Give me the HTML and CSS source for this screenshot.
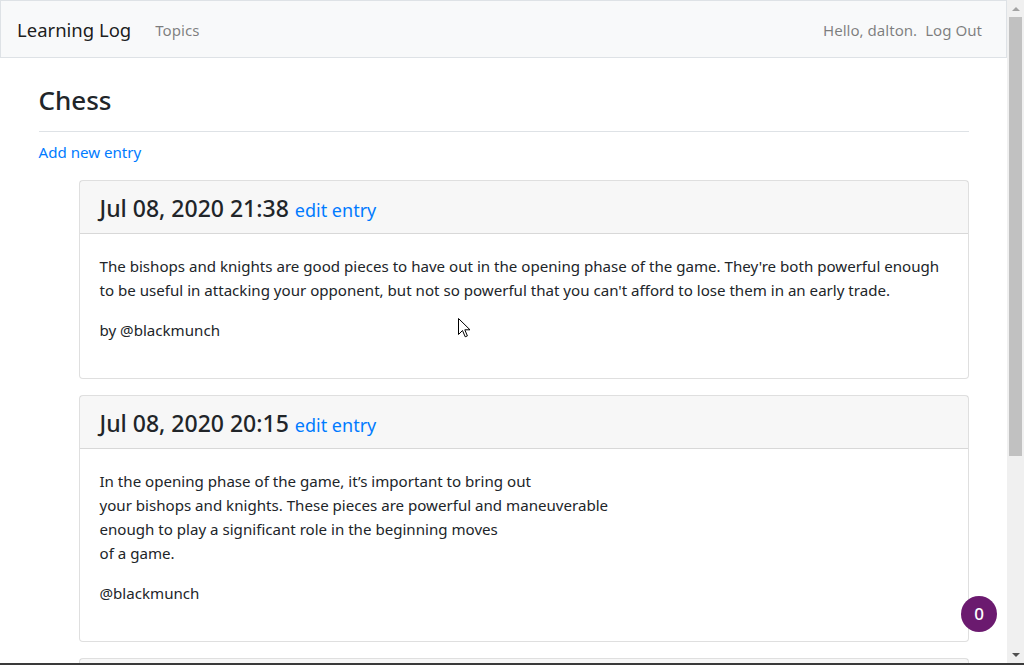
FILE: index.html
```
<!DOCTYPE html>
<html lang="en">
<head>
<meta charset="utf-8">
<title>Learning Log</title>
<link rel="stylesheet" href="styles.css">
</head>
<body>
<div class="window">
  <div class="viewport">
    <nav class="navbar">
      <a class="brand" href="#">Learning Log</a>
      <ul class="nav nav-left">
        <li><a class="nav-link" href="#">Topics</a></li>
      </ul>
      <ul class="nav nav-right">
        <li><span class="nav-text">Hello, dalton.</span></li>
        <li><a class="nav-link" href="#">Log Out</a></li>
      </ul>
    </nav>
    <main class="container">
      <div class="page-header">
        <h3>Chess</h3>
      </div>
      <div class="content">
        <p><a href="#">Add new entry</a></p>
        <ul class="entries">
          <li class="card">
            <h4 class="card-header">Jul 08, 2020 21:38 <small><a href="#">edit entry</a></small></h4>
            <div class="card-body">
              <p>The bishops and knights are good pieces to have out in the opening phase of the game. They're both powerful enough to be useful in attacking your opponent, but not so powerful that you can't afford to lose them in an early trade.</p>
              <p>by @blackmunch</p>
            </div>
          </li>
          <li class="card">
            <h4 class="card-header">Jul 08, 2020 20:15 <small><a href="#">edit entry</a></small></h4>
            <div class="card-body">
              <p>In the opening phase of the game, it’s important to bring out<br>your bishops and knights. These pieces are powerful and maneuverable<br>enough to play a significant role in the beginning moves<br>of a game.</p>
              <p>@blackmunch</p>
            </div>
          </li>
          <li class="card">
            <div class="card-header"></div>
            <div class="card-body"></div>
          </li>
        </ul>
      </div>
    </main>
    <div class="badge">0</div>
    <svg class="cursor" width="13" height="20" viewBox="0 0 13 20"><path d="M0.5 0.5 L0.5 16.5 L4.5 12.5 L7.2 18.8 L9.4 17.9 L6.8 11.8 L12 11.8 Z" fill="#fff" stroke="#000" stroke-width="1" stroke-linejoin="miter"/></svg>
  </div>
  <div class="scrollbar">
    <div class="arrow arrow-up"></div>
    <div class="track"><div class="thumb"></div></div>
    <div class="arrow arrow-down"></div>
  </div>
</div>
<div class="taskline"></div>
</body>
</html>
```
FILE: styles.css
```
* { box-sizing: border-box; }
html, body { margin: 0; padding: 0; height: 665px; overflow: hidden; }
body {
  font-family: "Noto Sans", "Open Sans", sans-serif;
  font-size: 15.1px;
  line-height: 24px;
  color: #212529;
  background: #fff;
  display: flex;
  flex-direction: column;
}
a { color: #007bff; text-decoration: none; }
p { margin: 0 0 16px; }

.window { display: flex; height: 663px; }
.viewport { flex: 1; position: relative; overflow: hidden; }
.taskline { height: 2px; background: #3a3a3a; }

.navbar {
  display: flex;
  align-items: center;
  padding: 9px 16px 7px;
  background: #f8f9fa;
  border: 1px solid #dee2e6;
  margin-bottom: 24px;
  height: 58px;
}
.brand {
  font-size: 18.5px;
  line-height: 30px;
  color: rgba(0,0,0,.9);
  margin-right: 16px;
  padding: 5px 0;
}
.nav { list-style: none; margin: 0; padding: 0; display: flex; }
.nav-right { margin-left: auto; }
.nav-link, .nav-text {
  display: block;
  padding: 8px;
  color: rgba(0,0,0,.5);
}
.nav-text { padding: 8px 0; }

.container {
  width: 960px;
  margin: 0 auto;
  padding: 0 15px;
}
.page-header {
  padding-bottom: 8px;
  margin-bottom: 8px;
  border-bottom: 1px solid #dee2e6;
}
h3 {
  font-size: 26px;
  line-height: 33px;
  font-weight: 500;
  margin: 0 0 8px;
  padding-top: 2px;
  height: 33px;
}
.entries { list-style: none; margin: 0; padding: 0 0 0 40px; }
.card {
  border: 1px solid rgba(0,0,0,.125);
  border-radius: 4px;
  margin-bottom: 16px;
  background: #fff;
}
.card-header {
  margin: 0;
  padding: 13px 20px 11px;
  font-size: 23px;
  line-height: 28.8px;
  height: 53px;
  font-weight: 500;
  background: rgba(0,0,0,.03);
  border-bottom: 1px solid rgba(0,0,0,.125);
}
.card-header small { font-size: 18px; font-weight: 400; line-height: 1; }
.card-body { padding: 20px; min-height: 80px; }

.badge {
  position: absolute;
  right: 10px;
  bottom: 31px;
  width: 36px;
  height: 36px;
  border-radius: 50%;
  background: #6b1a6f;
  color: #fff;
  display: flex;
  align-items: center;
  justify-content: center;
  font-size: 17px;
  font-weight: 500;
}
.cursor { position: absolute; left: 458px; top: 318px; }

.scrollbar {
  width: 17px;
  background: #f0f0f0;
  display: flex;
  flex-direction: column;
}
.arrow { height: 17px; display: flex; align-items: center; justify-content: center; }
.arrow-up::before {
  content: ""; border-left: 4px solid transparent; border-right: 4px solid transparent;
  border-bottom: 4px solid #a3a3a3;
}
.arrow-down::before {
  content: ""; border-left: 4px solid transparent; border-right: 4px solid transparent;
  border-top: 4px solid #505050;
}
.track { flex: 1; padding: 0 2px; }
.thumb { height: 439px; background: #c1c1c1; }
```
